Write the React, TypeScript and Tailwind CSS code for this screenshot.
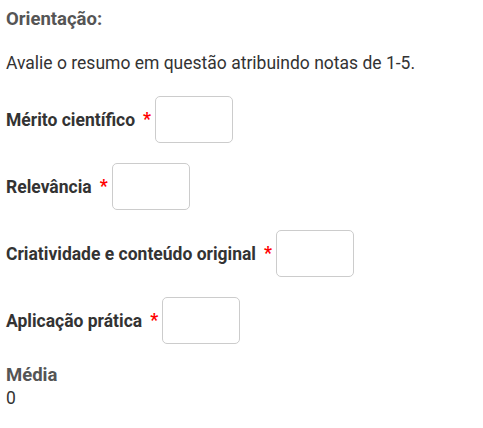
import { useState } from "react"

type Criterion = {
  id: string
  label: string
}

const criteria: Criterion[] = [
  { id: "merito", label: "Mérito científico" },
  { id: "relevancia", label: "Relevância" },
  { id: "criatividade", label: "Criatividade e conteúdo original" },
  { id: "aplicacao", label: "Aplicação prática" },
]

export default function App() {
  const [notas, setNotas] = useState<Record<string, string>>({})

  const valores = Object.values(notas)
    .map((v) => parseFloat(v))
    .filter((v) => !isNaN(v))
  const media = valores.length ? valores.reduce((a, b) => a + b, 0) / criteria.length : 0

  return (
    <div className="min-h-screen bg-white px-[6px] pt-[7px] font-['Roboto',sans-serif] text-[17.5px] text-[#333]">
      <h4 className="text-[18.5px] font-bold leading-6 text-[#555]">Orientação:</h4>
      <p className="mt-5 leading-6">Avalie o resumo em questão atribuindo notas de 1-5.</p>

      <div className="mt-[21px] flex flex-col gap-5">
        {criteria.map((c) => (
          <div key={c.id} className="flex items-center">
            <label htmlFor={c.id} className="font-bold leading-6 text-[#333]">
              {c.label}
            </label>
            <span className="ml-[8px] mr-[4px] font-bold text-[#f00]">*</span>
            <input
              id={c.id}
              type="text"
              value={notas[c.id] ?? ""}
              onChange={(e) => setNotas({ ...notas, [c.id]: e.target.value })}
              className="h-[47px] w-[78px] rounded-[5px] border border-[#ccc] bg-white px-2 outline-none"
            />
          </div>
        ))}
      </div>

      <div className="mt-[19px] text-[18.5px] font-bold leading-6 text-[#555]">Média</div>
      <div className="leading-[22px] text-[#333]">{media}</div>
    </div>
  )
}
